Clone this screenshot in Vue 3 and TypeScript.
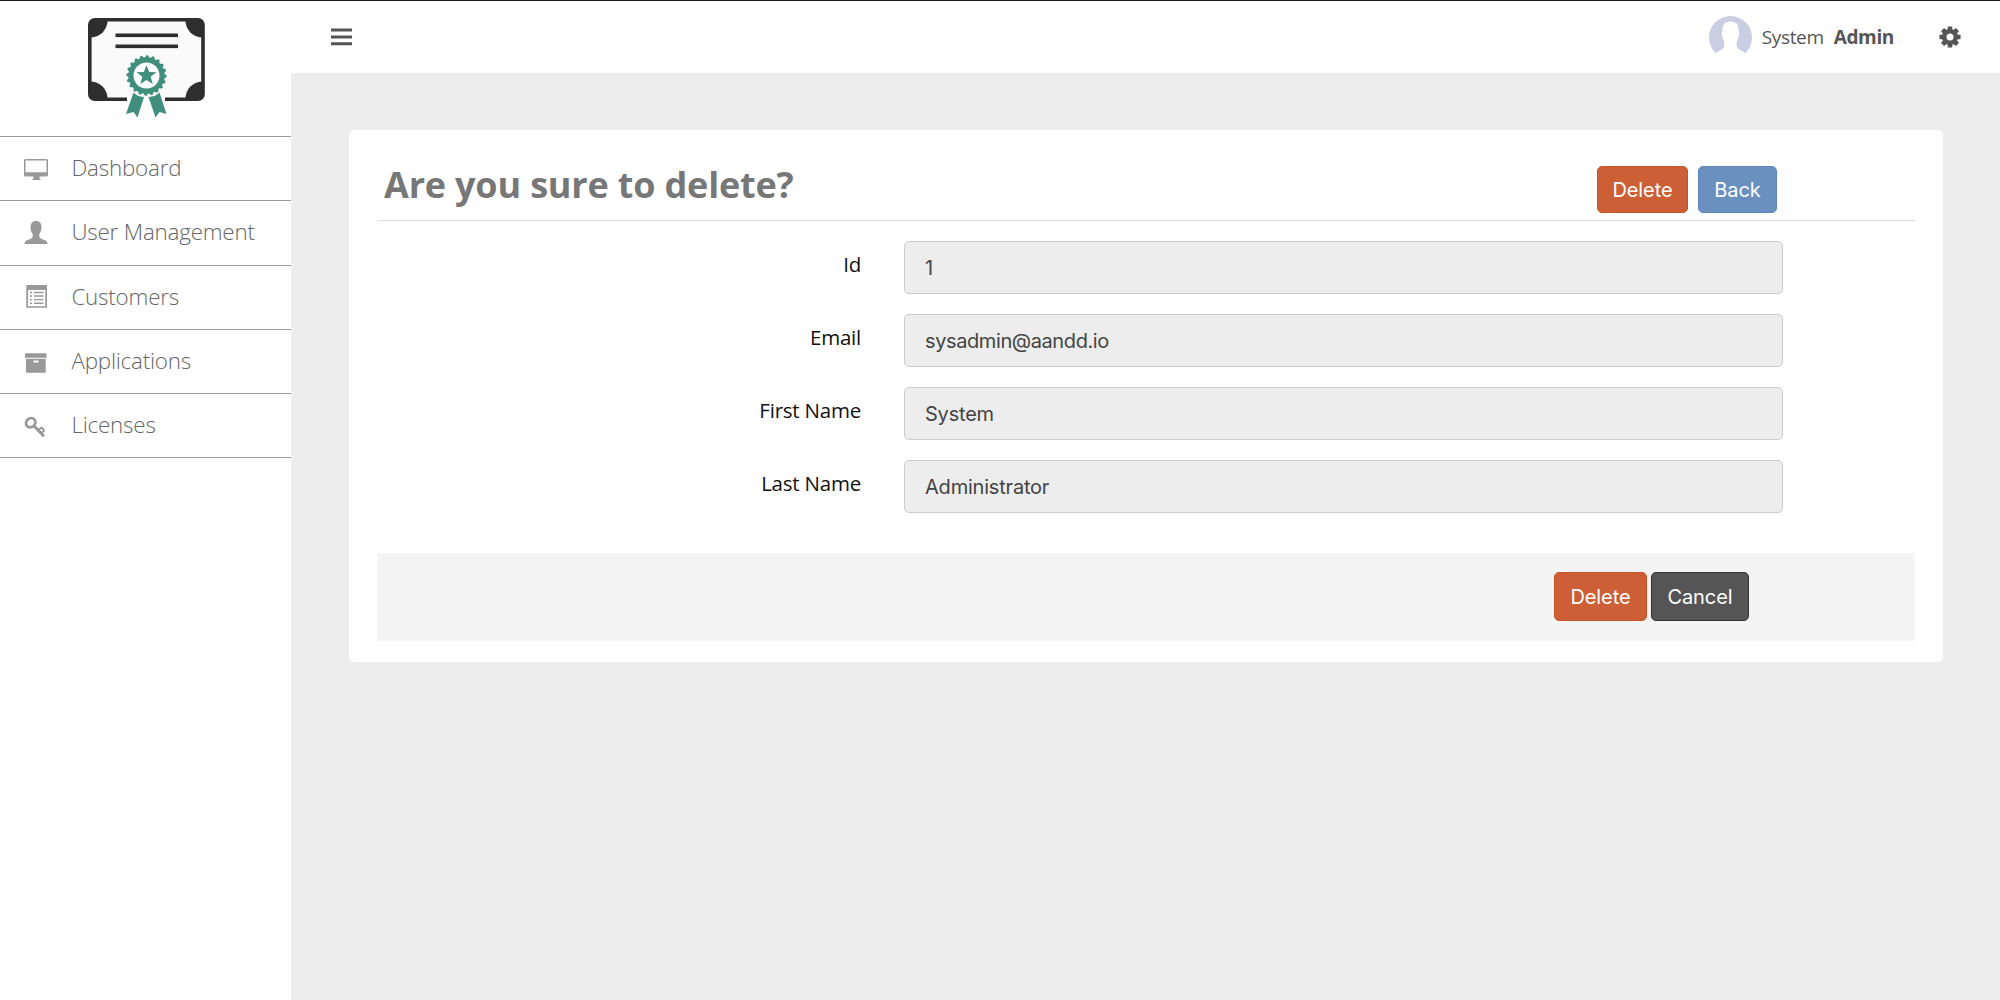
<script setup lang="ts">
interface NavItem {
  label: string
  icon: string
}

interface Field {
  label: string
  value: string
  kind?: string
}

const navItems: NavItem[] = [
  { label: 'Dashboard', icon: 'monitor' },
  { label: 'User Management', icon: 'user' },
  { label: 'Customers', icon: 'list' },
  { label: 'Applications', icon: 'archive' },
  { label: 'Licenses', icon: 'key' },
]

const fields: Field[] = [
  { label: 'Id', value: '1' },
  { label: 'Email', value: 'sysadmin@aandd.io', kind: 'email' },
  { label: 'First Name', value: 'System' },
  { label: 'Last Name', value: 'Administrator' },
]

// Scalloped outline of the rosette: 20 teeth alternating between two radii.
const rosette = Array.from({ length: 80 }, (_, i) => {
  const angle = (i / 80) * Math.PI * 2
  const r = i % 4 < 2 ? 20.2 : 18.2
  return `${(58.5 + r * Math.cos(angle)).toFixed(2)},${(57.5 + r * Math.sin(angle)).toFixed(2)}`
}).join(' ')
</script>

<template>
  <div class="page">
    <aside class="sidebar">
      <div class="brand">
        <svg class="logo" width="118" height="102" viewBox="0 0 118 102">
          <rect x="1.8" y="1.8" width="113.2" height="79.400" rx="5" fill="#fafafa" stroke="#2e2e2e" stroke-width="3.6" />
          <g fill="#2e2e2e">
            <path d="M2 2H19.5A17 17 0 0 1 3 19.5Z" />
            <path d="M115 2H97.5A17 17 0 0 0 114 19.5Z" />
            <path d="M3 63.5A17 17 0 0 1 19.5 81H5Q3 81 3 78Z" />
            <path d="M114 63.5A17 17 0 0 0 97.5 81H112Q114 81 114 78Z" />
            <rect x="27.5" y="15.5" width="62.5" height="3.6" />
            <rect x="27.5" y="26.5" width="62.5" height="3.6" />
          </g>
          <rect x="39" y="77" width="38" height="8" fill="#fff" />
          <g fill="#3f8f7c">
            <path d="M45.5 74.5Q49 78.500 56 79L49.5 99.500L45.5 94L38 96Z" />
            <path d="M71.5 74.5Q68 78.500 60.5 79L67.5 99.500L71.5 94L78.5 96Z" />
            <polygon :points="rosette" stroke="#fff" stroke-width="1.500" paint-order="stroke" />
          </g>
          <circle cx="58.5" cy="57.500" r="13" fill="#fff" />
          <path d="M58.5 47L61.100 53.900L68.500 54.200L62.700 58.800L64.700 66L58.5 61.900L52.300 66L54.300 58.800L48.500 54.200L55.900 53.900Z" fill="#3f8f7c" />
        </svg>
      </div>
      <nav>
        <a v-for="item in navItems" :key="item.label" class="nav-item">
          <svg class="nav-icon" width="26" height="26" viewBox="0 0 26 26" fill="#999">
            <path v-if="item.icon === 'monitor'" fill-rule="evenodd" d="M2.5 2H23.5Q25 2 25 3.5V18Q25 19.5 23.5 19.5H16.5V21.5H17.500V23H9.500V21.5H10.5V19.5H2.500Q1 19.5 1 18V3.5Q1 2 2.5 2ZM2.500 3.5V15.2H23.5V3.500Z" />
            <path v-else-if="item.icon === 'user'" d="M13 0C17 0 18.5 2.6 18.5 6.5C18.5 9.5 17.5 11.5 16.3 13V15.500C16.300 17 18 17.500 20.500 18.700C23.500 20 24.500 20.500 24.500 23H1.500C1.500 20.500 2.500 20 5.500 18.700C8 17.500 9.700 17 9.700 15.500V13C8.500 11.500 7.500 9.500 7.500 6.500C7.500 2.600 9 0 13 0Z" />
            <path v-else-if="item.icon === 'list'" fill-rule="evenodd" d="M3.300 0H24V22.800H3.300ZM5 5V21.300H22.300V5ZM7 6.800H9V8.200H7ZM11 6.800H20.500V8.200H11ZM7 10.300H9V11.700H7ZM11 10.300H20.500V11.700H11ZM7 13.900H9V15.300H7ZM11 13.900H20.500V15.300H11ZM7 17.500H9V18.900H7ZM11 17.500H20.500V18.900H11Z" />
            <path v-else-if="item.icon === 'archive'" fill-rule="evenodd" d="M2 3.200H23.500V7.700H2ZM3 8.700H22.700V22.800H3ZM10.500 10.400V12.600H15.500V10.400Z" />
            <g v-else fill="none" stroke="#999">
              <ellipse cx="7.700" cy="8.700" rx="4.900" ry="4.300" transform="rotate(-40 7.700 8.700)" stroke-width="2.800" />
              <path d="M11.300 12.300L21 22.300" stroke-width="3" />
              <path d="M15.500 16L18.500 13.500L21.500 16.500M18.500 19L21.500 16.500" stroke-width="1.800" />
            </g>
          </svg>
          <span>{{ item.label }}</span>
        </a>
      </nav>
    </aside>

    <div class="main">
      <header class="topbar">
        <svg width="21" height="18" viewBox="0 0 21 18" fill="#555">
          <path d="M0 .5H21V3.500H0ZM0 7.400H21V10.400H0ZM0 14.200H21V17.200H0Z" />
        </svg>
        <div class="account">
          <svg class="avatar" width="43" height="43" viewBox="0 0 43 43">
            <circle cx="21.5" cy="21.5" r="21.5" fill="#c9cee2" />
            <path d="M21.500 5.500C27 5.500 29.500 8.500 29.500 13.500C29.500 15.500 30.700 16.500 30.200 19C29.800 21.500 29 22.500 28.200 24C27.500 28 27.500 29 28 31C29 34 34 34.500 36.500 37.500V43H6.500V37.500C9 34.500 14 34 15 31C15.500 29 15.500 28 14.800 24C14 22.500 13.200 21.500 12.800 19C12.300 16.500 13.500 15.500 13.500 13.500C13.500 8.500 16 5.500 21.500 5.500Z" fill="#fff" />
          </svg>
          <span class="first">System</span>
          <b>Admin</b>
        </div>
        <svg class="gear" width="22" height="22" viewBox="-11 -11 22 22" fill="#555">
          <g>
            <rect v-for="n in 4" :key="n" x="-2.300" y="-10.500" width="4.600" height="21" rx=".6" :transform="`rotate(${n * 45})`" />
          </g>
          <circle r="8" />
          <circle r="3.500" fill="#fff" />
        </svg>
      </header>

      <main class="card">
        <div class="card-head">
          <h1>Are you sure to delete?</h1>
          <div class="head-actions">
            <button class="btn danger">Delete</button>
            <button class="btn primary">Back</button>
          </div>
        </div>
        <div class="form">
          <div v-for="field in fields" :key="field.label" class="row">
            <label>{{ field.label }}</label>
            <div class="control" :class="field.kind">{{ field.value }}</div>
          </div>
        </div>
        <footer class="card-foot">
          <button class="btn danger">Delete</button>
          <button class="btn dark">Cancel</button>
        </footer>
      </main>
    </div>
  </div>
</template>

<style>
body {
  margin: 0;
  background: #ededed;
}
</style>

<style scoped>
.page {
  box-sizing: border-box;
  display: flex;
  width: 2000px;
  height: 1000px;
  overflow: hidden;
  border-top: 1px solid #1c1a1c;
  background: #ededed;
  font-family: 'Open Sans', sans-serif;
}

.sidebar {
  flex: 0 0 291.4px;
  background: #fff;
}

.brand {
  box-sizing: border-box;
  height: 136px;
  padding: 16.5px 0 0 87.5px;
  border-bottom: 1px solid #999;
}

.logo {
  display: block;
}

.nav-item {
  box-sizing: border-box;
  display: flex;
  align-items: center;
  height: 64.3px;
  padding-left: 23px;
  border-bottom: 1px solid #999;
  color: #666;
  font-size: 22.4px;
  font-weight: 300;
  letter-spacing: -0.2px;
}

.nav-item span {
  margin-bottom: 2px;
}

.nav-icon {
  margin: 2px 22.4px 0 0;
}

.main {
  flex: 1;
  min-width: 0;
}

.topbar {
  display: flex;
  align-items: center;
  height: 72px;
  padding: 0 39px 0 40px;
  background: #fff;
}

.account {
  display: flex;
  align-items: center;
  margin-left: auto;
  color: #555;
  font-size: 19px;
  letter-spacing: -0.35px;
}

.avatar {
  margin-right: 10px;
}

.first {
  margin-right: 10px;
}

.gear {
  margin-left: 45px;
}

.card {
  box-sizing: border-box;
  width: 1594px;
  height: 532px;
  margin: 57px 0 0 57.6px;
  padding: 0 28px;
  border-radius: 5px;
  background: #fff;
}

.card-head {
  box-sizing: border-box;
  display: flex;
  height: 91px;
  padding: 0 138px 0 7px;
  border-bottom: 1px solid #ddd;
}

h1 {
  margin: 30px 0 0;
  color: #777;
  font-size: 36px;
  line-height: 49px;
  letter-spacing: -0.18px;
}

.head-actions {
  display: flex;
  gap: 10px;
  margin: 36px 0 0 auto;
}

.btn {
  box-sizing: border-box;
  height: 47px;
  padding: 0;
  border: 1px solid;
  border-radius: 5px;
  color: #fff;
  font-family: Inter, sans-serif;
  font-size: 20px;
  letter-spacing: -0.1px;
}

.danger {
  width: 91px;
  border-color: #c95428;
  background: #cc5f35;
}

.primary {
  width: 79px;
  border-color: #5f88bd;
  background: #6a90bf;
}

.dark {
  width: 98px;
  border-color: #333;
  background: #555;
}

.form {
  display: flex;
  flex-direction: column;
  gap: 20px;
  padding-top: 20px;
}

.row {
  display: flex;
  height: 53px;
}

label {
  width: 484px;
  padding-top: 9px;
  color: #111;
  font-size: 20.5px;
  line-height: 28px;
  letter-spacing: -0.22px;
  text-align: right;
}

.control {
  box-sizing: border-box;
  display: flex;
  align-items: center;
  width: 879px;
  margin-left: 43px;
  padding: 1px 0 0 20px;
  border: 1px solid #c8cdd2;
  border-radius: 5px;
  background: #ededed;
  color: #444;
  font-family: Inter, sans-serif;
  font-size: 20px;
  letter-spacing: -0.2px;
}

.control.email {
  letter-spacing: -0.4px;
}

.card-foot {
  box-sizing: border-box;
  display: flex;
  justify-content: flex-end;
  gap: 4px;
  height: 88px;
  margin-top: 40px;
  padding: 19px 166px 0 0;
  background: #f4f4f4;
}

.card-foot .btn {
  height: 49px;
  padding-top: 1px;
}

.card-foot .danger {
  width: 93px;
}
</style>
